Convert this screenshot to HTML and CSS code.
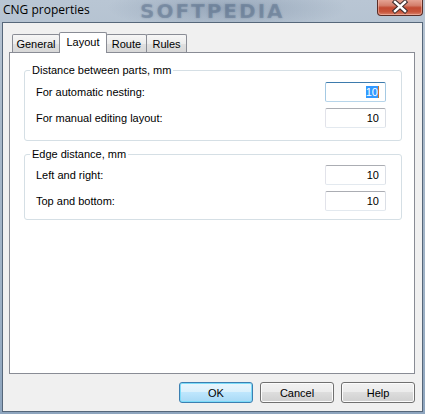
FILE: index.html
```html
<!DOCTYPE html>
<html lang="en">
<head>
    <meta charset="UTF-8">
    <meta name="viewport" content="width=device-width, initial-scale=1.0">
    <title>CNG properties</title>
    <link rel="stylesheet" href="styles.css">
</head>
<body>
    <div class="window">
        <div class="title-bar">
            <span class="title">CNG properties</span>
            <span class="watermark">SOFTPEDIA</span>
            <div class="close-button">
                <svg width="46" height="17" viewBox="0 0 46 17">
                    <path d="M18 4 L28 13 M28 4 L18 13" stroke="#3a2a2a" stroke-width="4.4" stroke-linecap="square"/>
                    <path d="M18 4 L28 13 M28 4 L18 13" stroke="#ffffff" stroke-width="2.4" stroke-linecap="square"/>
                </svg>
            </div>
        </div>

        <div class="client">
            <div class="tabs">
                <div class="tab tab-general">General</div>
                <div class="tab tab-layout selected">Layout</div>
                <div class="tab tab-route">Route</div>
                <div class="tab tab-rules">Rules</div>
            </div>

            <div class="tab-panel">
                <fieldset class="group group-parts">
                    <legend>Distance between parts, mm</legend>
                    <div class="row">
                        <span>For automatic nesting:</span>
                        <div class="field focused"><span class="selection">10</span></div>
                    </div>
                    <div class="row">
                        <span>For manual editing layout:</span>
                        <div class="field">10</div>
                    </div>
                </fieldset>

                <fieldset class="group group-edge">
                    <legend>Edge distance, mm</legend>
                    <div class="row">
                        <span>Left and right:</span>
                        <div class="field">10</div>
                    </div>
                    <div class="row">
                        <span>Top and bottom:</span>
                        <div class="field">10</div>
                    </div>
                </fieldset>
            </div>

            <div class="buttons">
                <button class="default">OK</button>
                <button>Cancel</button>
                <button>Help</button>
            </div>
        </div>
    </div>
</body>
</html>
```

FILE: styles.css
```css
body {
    margin: 0;
    font-family: 'Liberation Sans', Arial, sans-serif;
    font-size: 11px;
    color: #000;
}

.window {
    width: 425px;
    height: 414px;
    box-sizing: border-box;
    display: flex;
    flex-direction: column;
    padding: 0 2px 2px;
    background: linear-gradient(to bottom, #b9c6d4 0%, #a8b8c9 30%, #9fb2c6 70%, #8ea5be 100%);
    overflow: hidden;
}

.title-bar {
    height: 22px;
    display: flex;
    align-items: flex-start;
    position: relative;
    flex-shrink: 0;
    background: radial-gradient(ellipse 120px 22px at 225px 8px, rgba(90, 112, 140, 0.35), rgba(90, 112, 140, 0));
}

.title {
    font-family: 'Open Sans', 'Noto Sans', sans-serif;
    font-size: 12px;
    margin: 2px 0 0 1px;
    line-height: 16px;
}

.watermark {
    position: absolute;
    left: 138px;
    top: 0;
    font-family: 'DejaVu Sans', sans-serif;
    font-weight: bold;
    font-size: 20px;
    line-height: 22px;
    letter-spacing: 2px;
    color: rgba(66, 90, 120, 0.3);
    text-shadow: 0 0 2px rgba(66, 90, 120, 0.3);
}

.close-button {
    margin-left: auto;
    width: 46px;
    height: 17px;
    box-sizing: border-box;
    margin-top: -1px;
    border: 1px solid #5a2d26;
    border-top: none;
    border-radius: 0 0 4px 4px;
    background: linear-gradient(to bottom, #e8a99a 0%, #d47f6c 40%, #c24a32 55%, #c8553b 80%, #d9856f 100%);
    box-shadow: inset 0 0 0 1px rgba(255, 210, 200, 0.45);
}

.close-button svg {
    display: block;
    margin: -1px 0 0 -1px;
}

.client {
    flex: 1;
    display: flex;
    flex-direction: column;
    border: 1px solid #56677a;
    background: #f0f0f0;
    padding: 9px 7px 8px 6px;
}

.tabs {
    display: flex;
    align-items: flex-end;
    height: 21px;
    padding-left: 3px;
    flex-shrink: 0;
}

.tab {
    height: 18px;
    box-sizing: border-box;
    margin-bottom: 1px;
    margin-left: -1px;
    border: 1px solid #898c95;
    border-bottom: none;
    border-radius: 2px 2px 0 0;
    background: linear-gradient(to bottom, #f6f6f6 0%, #ececec 50%, #e0e0e0 55%, #d8d8d8 100%);
    text-align: center;
    line-height: 18px;
}

.tab-general {
    width: 48px;
    margin-left: 0;
}

.tab-layout {
    width: 48px;
}

.tab-route,
.tab-rules {
    width: 41px;
}

.tab.selected {
    height: 21px;
    margin-bottom: 0;
    background: #fff;
    position: relative;
    z-index: 1;
    line-height: 18px;
}

.tab-panel {
    flex: 1;
    margin-top: -1px;
    background: #fff;
    border: 1px solid #898c95;
    padding: 11px 12px 0 14px;
}

.group {
    margin: 0;
    border: 1px solid #d5dfe5;
    border-radius: 3px;
    padding: 5px 15px 12px 11px;
}

.group legend {
    padding: 0 2px;
    margin-left: -6px;
    line-height: 13px;
}

.group-edge {
    margin-top: 7px;
    padding-top: 4px;
    padding-bottom: 8px;
}

.row {
    display: flex;
    align-items: center;
    justify-content: space-between;
    height: 20px;
}

.row + .row {
    margin-top: 6px;
}

.field {
    width: 61px;
    height: 20px;
    box-sizing: border-box;
    background: #fff;
    border: 1px solid;
    border-color: #abadb3 #dbdfe6 #e3e9ef #e2e3ea;
    border-radius: 2px;
    text-align: right;
    padding-right: 6px;
    line-height: 18px;
}

.field.focused {
    border-color: #3d7bad #a4c9e3 #b7d5ea #a4c9e3;
}

.selection {
    display: inline-block;
    height: 12px;
    line-height: 12px;
    vertical-align: middle;
    margin-top: -2px;
    background: #3399ff;
    color: #fff;
    border-right: 1px solid #c8752e;
}

.buttons {
    display: flex;
    justify-content: flex-end;
    gap: 7px;
    margin-top: 8px;
    flex-shrink: 0;
}

button {
    width: 74px;
    height: 21px;
    padding: 0;
    font-family: 'Liberation Sans', Arial, sans-serif;
    font-size: 11px;
    color: #000;
    border: 1px solid #707070;
    border-radius: 3px;
    background: linear-gradient(to bottom, #f2f2f2 0%, #ebebeb 50%, #dddddd 50%, #cfcfcf 100%);
    box-shadow: inset 0 0 0 1px #fcfcfc;
}

button.default {
    border-color: #3c7fb1;
    background: linear-gradient(to bottom, #eaf6fd 0%, #d9f0fc 50%, #bee6fd 50%, #a7d9f5 100%);
    box-shadow: inset 0 0 0 1px #7ddcf9;
}
```
